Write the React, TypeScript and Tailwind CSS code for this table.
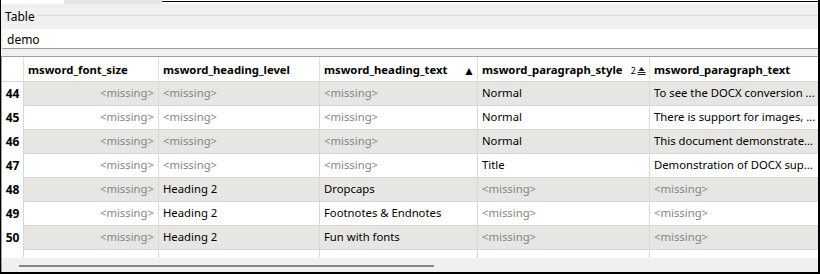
import React from "react";

const F = { fontFamily: '"Noto Sans", "Open Sans", sans-serif' };

type Cell = { t: string; m?: boolean };
const M: Cell = { t: "<missing>", m: true };

const rows: { n: number; cells: Cell[] }[] = [
  { n: 44, cells: [M, M, M, { t: "Normal" }, { t: "To see the DOCX conversion ..." }] },
  { n: 45, cells: [M, M, M, { t: "Normal" }, { t: "There is support for images, ..." }] },
  { n: 46, cells: [M, M, M, { t: "Normal" }, { t: "This document demonstrate..." }] },
  { n: 47, cells: [M, M, M, { t: "Title" }, { t: "Demonstration of DOCX sup..." }] },
  { n: 48, cells: [M, { t: "Heading 2" }, { t: "Dropcaps" }, M, M] },
  { n: 49, cells: [M, { t: "Heading 2" }, { t: "Footnotes & Endnotes" }, M, M] },
  { n: 50, cells: [M, { t: "Heading 2" }, { t: "Fun with fonts" }, M, M] },
];

const widths = ["w-[135px]", "w-[161px]", "w-[158px]", "w-[172px]", "flex-1"];

function SortIcon2() {
  return (
    <span className="flex items-center gap-[1px]">
      <span className="text-[9px] leading-none text-black font-normal">2</span>
      <svg width="9" height="10" viewBox="0 0 9 10">
        <polygon points="4.5,1 1.5,5 7.5,5" fill="#222" />
        <rect x="0.5" y="6" width="8" height="1" fill="#222" />
        <rect x="0.5" y="8" width="8" height="1" fill="#222" />
      </svg>
    </span>
  );
}

export default function App() {
  return (
    <div
      className="w-[820px] h-[274px] bg-[#f0f0f0] border-l border-r-2 border-b-2 border-black flex flex-col overflow-hidden text-[11.3px] text-black"
      style={F}
    >
      {/* top tab strip */}
      <div className="h-[4px] flex shrink-0">
        <div className="w-[63px] bg-white" />
        <div className="w-[98px] bg-[#e6e6e6]" />
        <div className="flex-1 bg-white flex flex-col">
          <div className="h-[1px] bg-white" />
          <div className="h-[1px] bg-black" />
        </div>
      </div>
      {/* group box */}
      <div className="h-[25px] shrink-0 flex items-center pl-[4px] relative text-[12px]">
        <span className="leading-none">Table</span>
        <div className="flex-1 h-[1px] bg-[#dcdcdc] ml-[2px] mt-[-2px]" />
      </div>
      <div className="h-[19px] shrink-0 bg-white ml-[2px] flex items-center pl-[4px] pt-[2px] text-[12px]">
        <span className="leading-none">demo</span>
      </div>
      <div className="h-[1px] shrink-0 bg-[#a0a0a0] ml-[1px]" />
      <div className="h-[7px] shrink-0" />
      {/* table */}
      <div className="flex-1 flex flex-col border-t border-l border-[#a0a0a0] min-h-0">
        {/* header */}
        <div className="h-[25px] shrink-0 flex bg-white border-b border-[#d8d8d8]">
          <div className="w-[22px] border-r border-[#e0e0e0]" />
          <div className="w-[135px] border-r border-[#e0e0e0] flex items-center pl-[4px] font-bold pt-[3px]">
            msword_font_size
          </div>
          <div className="w-[161px] border-r border-[#e0e0e0] flex items-center pl-[4px] font-bold pt-[3px]">
            msword_heading_level
          </div>
          <div className="w-[158px] border-r border-[#e0e0e0] flex items-center justify-between pl-[4px] pr-[2px] font-bold pt-[3px]">
            <span>msword_heading_text</span>
            <span className="text-[12px] leading-none">▲</span>
          </div>
          <div className="w-[172px] border-r border-[#e0e0e0] flex items-center justify-between pl-[4px] pr-[3px] font-bold pt-[3px]">
            <span>msword_paragraph_style</span>
            <SortIcon2 />
          </div>
          <div className="flex-1 flex items-center pl-[4px] font-bold pt-[3px]">
            msword_paragraph_text
          </div>
        </div>
        {rows.map((r, i) => (
          <div key={r.n} className="h-[24px] shrink-0 flex">
            <div className="w-[22px] bg-white border-r border-[#d8d8d8] flex items-center justify-center font-bold text-[12px]">
              {r.n}
            </div>
            {r.cells.map((c, j) => (
              <div
                key={j}
                className={`${widths[j]} ${i % 2 === 0 ? "bg-[#e7e6e3]" : "bg-white"} border-b border-[#d8d8d8] ${
                  j < 4 ? "border-r" : ""
                } flex items-center ${j === 0 ? "justify-end pr-[4px]" : "pl-[4px]"} whitespace-nowrap overflow-hidden`}
              >
                <span className={c.m ? "text-[#858585]" : "text-black"}>{c.t}</span>
              </div>
            ))}
          </div>
        ))}
        {/* partial row */}
        <div className="flex-1 flex bg-white">
          <div className="w-[22px] border-r border-[#d8d8d8]" />
          <div className="w-[135px] border-r border-[#d8d8d8]" />
          <div className="w-[161px] border-r border-[#d8d8d8]" />
          <div className="w-[158px] border-r border-[#d8d8d8]" />
          <div className="w-[172px] border-r border-[#d8d8d8]" />
          <div className="flex-1" />
        </div>
        {/* scrollbar */}
        <div className="h-[14px] shrink-0 bg-[#f0f0f0] flex items-center pl-[17px]">
          <div className="w-[415px] h-[2px] bg-[#878787] mt-[2px]" />
        </div>
      </div>
    </div>
  );
}
